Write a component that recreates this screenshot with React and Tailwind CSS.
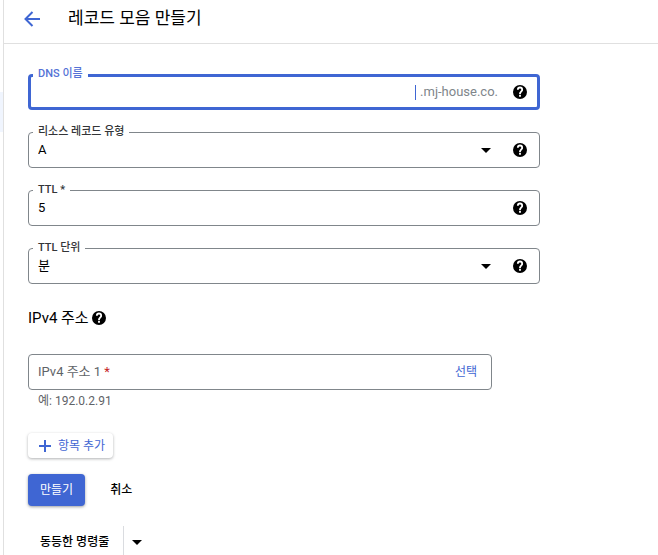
import { useState } from 'react';

const HelpIcon = () => (
  <svg viewBox="0 0 24 24" className="size-4 fill-black" aria-hidden="true">
    <path d="M12 1.500a10.500 10.500 0 1 0 0 21 10.500 10.500 0 0 0 0-21zm1.400 17.500h-2.800v-2.700h2.800V19zm2.500-8.100-1 1.100c-.9.900-1.500 1.600-1.500 3.100h-2.800v-.6c0-1.300.6-2.400 1.500-3.300l1.200-1.300c.4-.4.6-.9.600-1.400a1.900 1.900 0 0 0-3.800 0H7.400a4.600 4.600 0 0 1 9.200 0c0 1-.3 1.800-.7 2.400z" />
  </svg>
);

const HelpButton = ({ label }) => (
  <button type="button" aria-label={label} className="shrink-0">
    <HelpIcon />
  </button>
);

const DropIcon = () => (
  <svg viewBox="0 0 10 5" className="h-[5px] w-[10px] shrink-0 fill-black" aria-hidden="true">
    <path d="M0 0h10L5 5z" />
  </svg>
);

const Field = ({ id, label, children }) => (
  <div className="relative flex h-9 items-center rounded border border-[#80868b] pl-[9px] pr-[11px]">
    <label htmlFor={id} className="absolute -top-[9px] left-1 bg-white px-[5px] text-[11px]/4 font-medium text-[#333538]">
      {label}
    </label>
    {children}
  </div>
);

const SelectField = ({ id, label, options }) => (
  <Field id={id} label={label}>
    <select id={id} className="h-full min-w-0 flex-1 appearance-none bg-transparent text-[13px] outline-none">
      {options.map((option) => (
        <option key={option}>{option}</option>
      ))}
    </select>
    <DropIcon />
    <span className="ml-[21px] flex">
      <HelpButton label={`${label} 도움말`} />
    </span>
  </Field>
);

const App = () => {
  const [name, setName] = useState('');
  const [ttl, setTtl] = useState('5');
  const [address, setAddress] = useState('');

  return (
    <div className="flex h-screen overflow-hidden bg-white font-[Roboto,'Noto_Sans_CJK_KR',sans-serif] text-[13px] text-black">
      {/* Edge of the side menu */}
      <aside className="w-1 shrink-0 border-r border-[#e0e0e0] pt-[92px]">
        <div className="h-10 bg-[#f0f5fe]" />
      </aside>

      <main className="min-w-0 flex-1">
        <header className="flex h-11 items-center border-b border-[#e0e0e0] pb-[5px] pl-5">
          <button type="button" aria-label="뒤로" className="mr-7">
            <svg viewBox="0 0 16 16" className="size-4 fill-none stroke-[#3f66d3] stroke-2" aria-hidden="true">
              <path d="M16 8H1.500M8.500 1 1.500 8l7 7" />
            </svg>
          </button>
          <h1 className="text-[17px]">레코드 모음 만들기</h1>
        </header>

        <form className="px-6 pt-[30px]" onSubmit={(e) => e.preventDefault()}>
          <div className="flex max-w-lg flex-col gap-[22px]">
            <div className="relative flex h-9 items-center rounded border-3 border-[#3f66d3] pl-[7px] pr-[9px]">
              <label htmlFor="dns" className="absolute -top-[11px] left-0.5 bg-white px-[5px] text-[11px]/4 font-medium text-[#5572d6]">
                DNS 이름
              </label>
              <input
                id="dns"
                value={name}
                onChange={(e) => setName(e.target.value)}
                className="h-full min-w-0 flex-1 bg-transparent text-right outline-none"
              />
              <span className="h-[15px] w-px bg-[#3f66d3]" />
              <span className="ml-1 mr-[14px] text-[#80868b]">.mj-house.co.</span>
              <HelpButton label="DNS 이름 도움말" />
            </div>

            <SelectField id="type" label="리소스 레코드 유형" options={['A', 'AAAA', 'CNAME', 'MX', 'TXT']} />

            <Field id="ttl" label="TTL *">
              <input
                id="ttl"
                value={ttl}
                onChange={(e) => setTtl(e.target.value)}
                className="h-full min-w-0 flex-1 bg-transparent pb-0.5 outline-none"
              />
              <HelpButton label="TTL 도움말" />
            </Field>

            <SelectField id="unit" label="TTL 단위" options={['분', '초', '시간', '일']} />
          </div>

          {/* Addresses */}
          <div className="mt-[22px] flex h-6 items-center gap-0.5">
            <h2 className="text-[15px]">IPv4 주소</h2>
            <HelpButton label="IPv4 주소 도움말" />
          </div>

          <div className="relative mt-6 flex h-9 max-w-[464px] items-center rounded border border-[#80868b] pl-[9px] pr-[14px]">
            {!address && (
              <label htmlFor="address" className="pointer-events-none absolute left-[9px] text-[#5f6368]">
                IPv4 주소 1 <span className="text-[#c5221f]">*</span>
              </label>
            )}
            <input
              id="address"
              value={address}
              onChange={(e) => setAddress(e.target.value)}
              className="h-full min-w-0 flex-1 bg-transparent outline-none"
            />
            <button type="button" className="text-xs text-[#3f66d3]">선택</button>
          </div>
          <p className="mt-[3px] pl-[10px] text-xs/4 text-[#5f6368]">예: 192.0.2.91</p>

          <button
            type="button"
            className="mt-6 flex h-[25px] items-center gap-[7px] rounded bg-white pl-[11px] pr-2 text-xs text-[#3f66d3] shadow-[0_1px_3px_rgba(60,64,67,0.4)]"
          >
            <svg viewBox="0 0 12 12" className="size-3 fill-none stroke-[#3f66d3] stroke-2" aria-hidden="true">
              <path d="M6 0v12M0 6h12" />
            </svg>
            항목 추가
          </button>

          <div className="mt-4 flex h-8 items-center text-xs font-medium">
            <button type="submit" className="h-8 rounded bg-[#3f66d3] px-3 font-normal text-white shadow-[0_1px_3px_rgba(60,64,67,0.5)]">
              만들기
            </button>
            <button type="button" className="ml-[13px] h-8 px-3">취소</button>
          </div>

          <div className="mt-5 flex h-8 text-xs font-medium">
            <button type="button" className="border-r border-[#dadce0] pl-3 pr-[14px]">동등한 명령줄</button>
            <button type="button" aria-label="명령줄 옵션" className="px-2">
              <DropIcon />
            </button>
          </div>
        </form>
      </main>
    </div>
  );
};

export default App;
